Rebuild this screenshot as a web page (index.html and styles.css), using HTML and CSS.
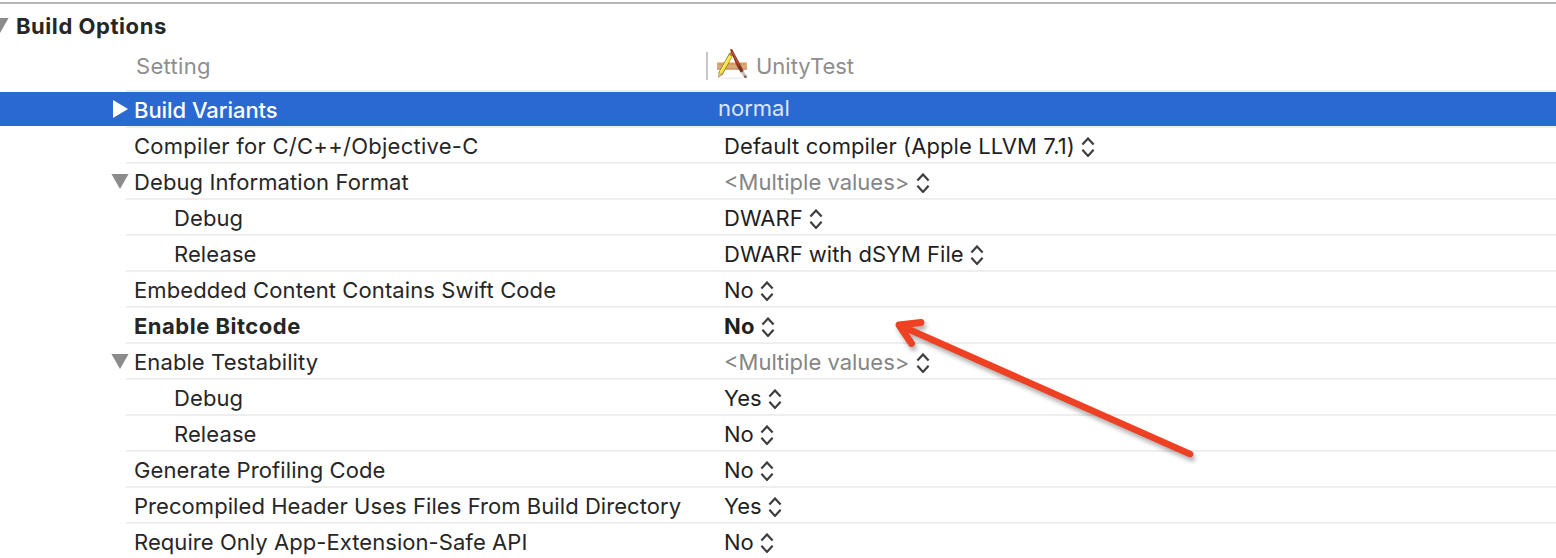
FILE: index.html
```html
<!DOCTYPE html>
<html lang="en">
<head>
<meta charset="utf-8">
<title>Build Options</title>
<link rel="stylesheet" href="styles.css">
</head>
<body>
<svg class="defs" width="0" height="0" aria-hidden="true">
  <symbol id="stepper" viewBox="0 0 14 20"><path d="M1.4 7.6 7 1.5l5.6 6.1M1.4 12.8 7 18.9l5.6-6.1" fill="none" stroke="#3d3d3d" stroke-width="2.2"/></symbol>
  <symbol id="open" viewBox="0 0 18 15"><path d="M.4 0h17.2L9 15z" fill="#8c8c8c"/></symbol>
</svg>
<main class="panel">
  <header class="title"><svg class="title-tri"><use href="#open"/></svg><h1>Build Options</h1></header>
  <div class="row head">
    <div class="gutter"></div>
    <div class="cells">
      <div class="name">Setting</div>
      <div class="value target">
        <svg class="app" viewBox="0 0 32 32">
          <ellipse cx="15" cy="30.2" rx="12" ry="1" fill="#eee"/>
          <path d="M1 14h30v7.5H1z" fill="#dda974"/>
          <path d="M1 14.5h30" stroke="#efcda0"/>
          <path d="M1 21h30" stroke="#c08b57"/>
          <path d="M4 15v2m3-2v2m6-2v2m3-2v2m3-2v2m6-2v2m3-2v2" stroke="#a87440" stroke-width=".7"/>
          <path d="M13 5.4 17 7.4 6.8 26.4 2.2 29.8l.5-5.6z" fill="#8a7420"/>
          <path d="M13.2 6.8 16.2 8.3 6 26l-2.7-1.5z" fill="#f7e33c"/>
          <path d="M13.2 8.5 4 24.6" stroke="#fff58a" stroke-width=".9"/>
          <path d="m13 5.4 1.6-1.5 2.9 1.6-.5 2z" fill="#d46a66"/>
          <path d="m3.4 24.6 2.5 1.4-3.5 3.4z" fill="#e5c290"/>
          <path d="M14 1.6 16 1l8.6 16-3.5 1.8z" fill="#8f301b"/>
          <path d="m16.2 3.6 6.4 13" stroke="#c66448" stroke-width=".9"/>
          <path d="m21.1 18.8 3.5-1.8 3.2 6.3-3 1.5z" fill="#7e3425"/>
          <path d="m24.8 24.6 2.9-1.4 2.7 4.2.2 2.8-2.7-.7z" fill="#cdbfb4"/>
          <path d="m28 27.8 2.3-.6.3 3-2.4-.8z" fill="#7a6254"/>
        </svg>
        <span>UnityTest</span>
      </div>
    </div>
  </div>
  <div class="row selected">
    <div class="gutter"><svg class="closed" viewBox="0 0 15 18"><path d="M0 0v18l15-9z" fill="#fff"/></svg></div>
    <div class="cells"><div class="name">Build Variants</div><div class="value">normal</div></div>
  </div>
  <div class="row"><div class="gutter"></div><div class="cells"><div class="name objc">Compiler for C/C++/Objective-C</div><div class="value compiler"><span>Default compiler (Apple LLVM 7.1)</span><svg class="step"><use href="#stepper"/></svg></div></div></div>
  <div class="row"><div class="gutter"><svg class="tri"><use href="#open"/></svg></div><div class="cells"><div class="name">Debug Information Format</div><div class="value"><span class="mixed">&lt;Multiple values&gt;</span><svg class="step"><use href="#stepper"/></svg></div></div></div>
  <div class="row"><div class="gutter"></div><div class="cells"><div class="name child">Debug</div><div class="value"><span>DWARF</span><svg class="step"><use href="#stepper"/></svg></div></div></div>
  <div class="row"><div class="gutter"></div><div class="cells"><div class="name child">Release</div><div class="value"><span>DWARF with dSYM File</span><svg class="step"><use href="#stepper"/></svg></div></div></div>
  <div class="row"><div class="gutter"></div><div class="cells"><div class="name">Embedded Content Contains Swift Code</div><div class="value"><span>No</span><svg class="step"><use href="#stepper"/></svg></div></div></div>
  <div class="row changed"><div class="gutter"></div><div class="cells"><div class="name">Enable Bitcode</div><div class="value"><span>No</span><svg class="step"><use href="#stepper"/></svg></div></div></div>
  <div class="row"><div class="gutter"><svg class="tri"><use href="#open"/></svg></div><div class="cells"><div class="name">Enable Testability</div><div class="value"><span class="mixed">&lt;Multiple values&gt;</span><svg class="step"><use href="#stepper"/></svg></div></div></div>
  <div class="row"><div class="gutter"></div><div class="cells"><div class="name child">Debug</div><div class="value"><span>Yes</span><svg class="step"><use href="#stepper"/></svg></div></div></div>
  <div class="row"><div class="gutter"></div><div class="cells"><div class="name child">Release</div><div class="value"><span>No</span><svg class="step"><use href="#stepper"/></svg></div></div></div>
  <div class="row"><div class="gutter"></div><div class="cells"><div class="name">Generate Profiling Code</div><div class="value"><span>No</span><svg class="step"><use href="#stepper"/></svg></div></div></div>
  <div class="row"><div class="gutter"></div><div class="cells"><div class="name long">Precompiled Header Uses Files From Build Directory</div><div class="value"><span>Yes</span><svg class="step"><use href="#stepper"/></svg></div></div></div>
  <div class="row"><div class="gutter"></div><div class="cells"><div class="name long">Require Only App-Extension-Safe API</div><div class="value"><span>No</span><svg class="step"><use href="#stepper"/></svg></div></div></div>
  <svg class="arrow" viewBox="880 300 330 180"><path d="M1190 454 899 325M921 322.5 899 325l12.5 18.5" fill="none" stroke="#ee4023" stroke-width="6.8" stroke-linecap="round" stroke-linejoin="round"/></svg>
</main>
</body>
</html>
```

FILE: styles.css
```css
* { box-sizing: border-box; }
body { margin: 0; background: #fff; overflow: hidden; }
.defs { display: block; }
.panel {
  position: relative;
  height: 558px;
  padding-top: 2px;
  overflow: hidden;
  font: 22px/34px Inter, "Liberation Sans", sans-serif;
  color: #262626;
}
.title {
  display: flex;
  align-items: flex-start;
  height: 42px;
  padding-top: 5px;
  border-top: 2px solid #b6b6b6;
}
.title-tri { flex: none; width: 18px; height: 15px; margin: 9px 7px 0 -9px; }
.title h1 { margin: 0; font-size: 22px; font-weight: 700; letter-spacing: .55px; }
.row { display: flex; height: 36px; }
.gutter { flex: none; width: 126px; height: 34px; }
.tri { display: block; width: 18px; height: 15px; margin: 10px 0 0 111px; }
.closed { display: block; width: 15px; height: 18px; margin: 8px 0 0 113px; }
.cells {
  flex: 1;
  display: grid;
  grid-template-columns: 590px 1fr;
  padding: 1px 0 0 8px;
  border-bottom: 2px solid #eee;
  background-clip: padding-box;
  white-space: nowrap;
}
.name { letter-spacing: .1px; }
.long { letter-spacing: .06px; }
.child { padding-left: 40px; }
.objc { letter-spacing: .26px; }
.compiler span { letter-spacing: .1px; }
.value { display: flex; align-items: flex-start; color: #1f1f1f; }
.mixed { color: #858585; }
.step { flex: none; width: 14px; height: 20px; margin: 8px 0 0 7px; }
.compiler .step, .value span:not(.mixed) + .step { margin-left: 6.5px; }
.changed { font-weight: 700; }
.changed .name { letter-spacing: .5px; }
.changed .value span { letter-spacing: .2px; }

.head { height: 48px; color: #8e8e8e; }
.head .cells { grid-template-columns: 572px 1fr; padding-top: 5px; }
.head .name { padding-left: 2px; letter-spacing: .3px; }
.target { height: 28px; margin-top: 3px; border-left: 2px solid #c6c6c6; line-height: 28px; color: #8e8e8e; }
.app { flex: none; width: 32px; height: 32px; margin: -4px 8px 0 8px; }

.selected .gutter, .selected .cells { background-color: #2a69d2; }
.selected .gutter { position: relative; z-index: 1; }
.selected .cells { grid-template-columns: 584px 1fr; }
.selected .name { color: #fff; font-weight: 500; letter-spacing: -.05px; }
.selected .value { margin-top: -2px; color: #dbe6fa; }

.arrow {
  position: absolute;
  left: 880px;
  top: 300px;
  width: 330px;
  height: 180px;
  filter: drop-shadow(2px 4px 2px rgba(0, 0, 0, .3));
}
```
